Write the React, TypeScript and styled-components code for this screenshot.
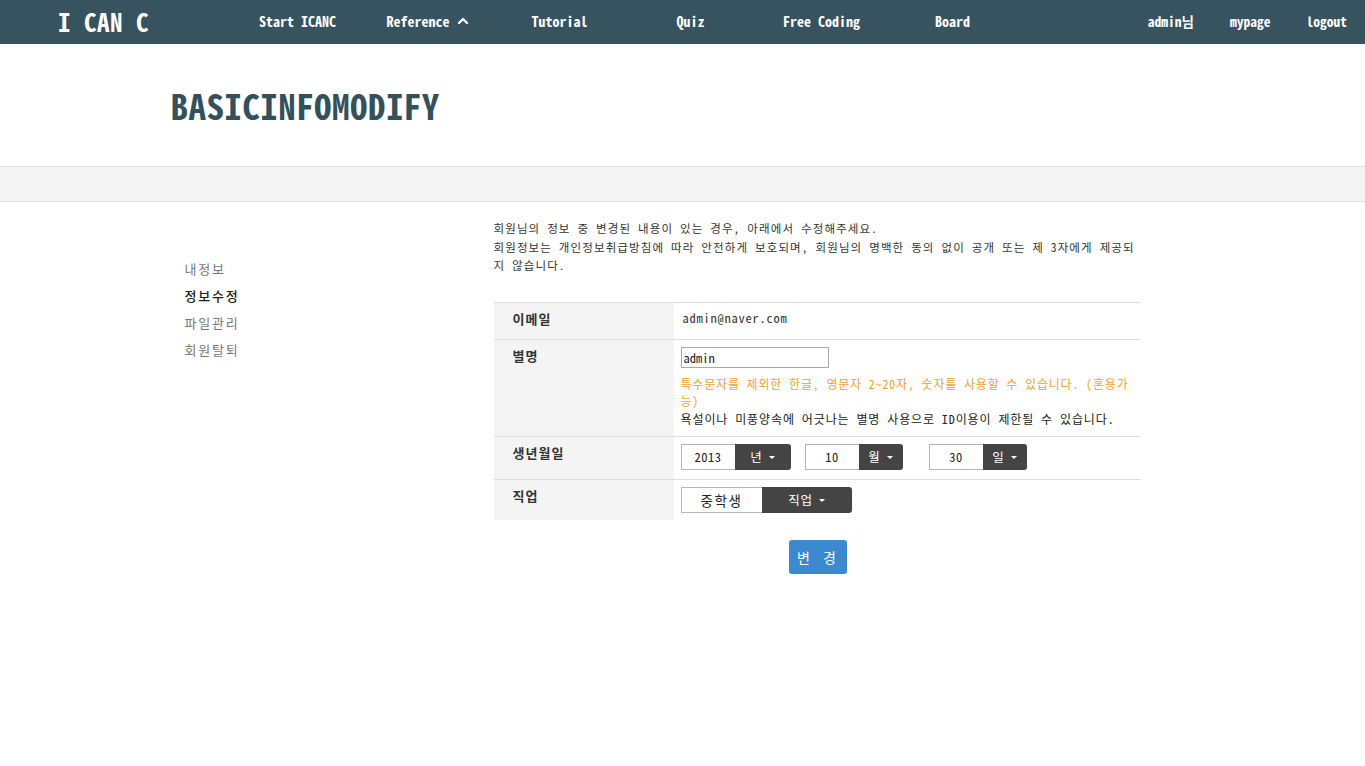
import React from 'react';
import styled, { createGlobalStyle } from 'styled-components';
import { ChevronUp } from 'lucide-react';

const MONO = `"Noto Sans Mono CJK KR", "DejaVu Sans Mono", "Noto Sans CJK KR", monospace`;
const SANS = `"Noto Sans CJK KR", "Noto Sans", sans-serif`;

const GlobalStyle = createGlobalStyle`
  html, body {
    margin: 0;
    padding: 0;
    background: #fff;
    font-family: ${MONO};
    color: #333;
  }
  * { box-sizing: border-box; }
`;

const NavBar = styled.header`
  height: 44px;
  background: #37535f;
  display: flex;
  align-items: center;
  padding: 0 18px 2px 58px;
  color: #fff;
`;

const Logo = styled.div`
  width: 174px;
  font-size: 25px;
  font-weight: 700;
  letter-spacing: 0.5px;
  white-space: pre;
`;

const Menu = styled.nav`
  display: flex;
  flex: 1;
`;

const MenuItem = styled.a`
  width: 131px;
  display: flex;
  justify-content: center;
  align-items: center;
  gap: 5px;
  font-size: 14px;
  font-weight: 700;
  color: #fff;
  white-space: nowrap;
`;

const UserMenu = styled.div`
  display: flex;
  align-items: center;
  gap: 36px;
  font-size: 13.5px;
  font-weight: 700;
`;

const TitleBand = styled.div`
  height: 123px;
  border-bottom: 1px solid #e3e3e3;
`;

const Container = styled.div`
  width: 1024px;
  margin: 0 auto;
`;

const PageTitle = styled.h1`
  margin: 0;
  padding-top: 39px;
  font-size: 35px;
  font-weight: 700;
  color: #34505c;
  letter-spacing: 0.45px;
  line-height: 44px;
`;

const GrayBand = styled.div`
  height: 35px;
  background: #f4f4f4;
  border-bottom: 1px solid #e3e3e3;
`;

const Body = styled(Container)`
  display: flex;
  padding-top: 17px;
`;

const Sidebar = styled.ul`
  list-style: none;
  margin: 0;
  padding: 36px 0 0 14px;
  width: 323px;
`;

const SideItem = styled.li<{ active?: boolean }>`
  font-family: ${SANS};
  font-size: 13px;
  letter-spacing: 1.8px;
  line-height: 27px;
  color: ${p => (p.active ? '#222' : '#777')};
  font-weight: ${p => (p.active ? 500 : 400)};
`;

const Content = styled.main`
  width: 647px;
`;

const Intro = styled.p`
  margin: 0 0 27px;
  font-size: 11.5px;
  line-height: 18.5px;
  letter-spacing: 1.12px;
  color: #333;
  white-space: nowrap;
`;

const Table = styled.div`
  border-top: 1px solid #ddd;
`;

const Row = styled.div<{ last?: boolean }>`
  display: grid;
  grid-template-columns: 180px 1fr;
  border-bottom: ${p => (p.last ? 'none' : '1px solid #ddd')};
`;

const Label = styled.div`
  background: #f4f4f4;
  padding: 6px 19px 8px;
  font-size: 13px;
  font-weight: 700;
  line-height: 20px;
  letter-spacing: 1px;
  color: #333;
`;

const Cell = styled.div<{ pt?: number; pb?: number }>`
  padding: ${p => p.pt ?? 7}px 7px ${p => p.pb ?? 9}px 9px;
  font-size: 12.5px;
  line-height: 18px;
  letter-spacing: 0.75px;
`;

const TextInput = styled.input`
  display: block;
  width: 148px;
  height: 21px;
  margin-left: -2px;
  padding: 0 2px;
  border: 1px solid #a9a9a9;
  font-family: ${MONO};
  font-size: 12.5px;
  color: #222;
  outline: none;
`;

const Hint = styled.div<{ warn?: boolean }>`
  color: ${p => (p.warn ? '#f0a12f' : '#222')};
  font-size: 12px;
  letter-spacing: ${p => (p.warn ? 0.82 : 0.9)}px;
  line-height: 17.5px;
  white-space: nowrap;
`;

const HintBlock = styled.div`
  margin-top: 7px;
  margin-left: -2px;
`;

const DateRow = styled.div`
  display: flex;
  align-items: center;
  margin-left: -2px;
`;

const Group = styled.div<{ ml?: number }>`
  display: flex;
  margin-left: ${p => p.ml ?? 0}px;
`;

const ValueBox = styled.div<{ w: number; big?: boolean }>`
  width: ${p => p.w}px;
  height: 26px;
  border: 1px solid #b5b5b5;
  border-right: none;
  display: flex;
  align-items: center;
  justify-content: center;
  font-size: ${p => (p.big ? 13.5 : 12.5)}px;
  letter-spacing: ${p => (p.big ? 1.5 : 0.5)}px;
  color: #222;
  background: #fff;
`;

const DarkButton = styled.div<{ w: number }>`
  width: ${p => p.w}px;
  height: 26px;
  background: #444;
  color: #fff;
  border-radius: 0 3px 3px 0;
  display: flex;
  align-items: center;
  justify-content: center;
  gap: 6px;
  font-size: 12.5px;
`;

const Caret = styled.span`
  width: 0;
  height: 0;
  border-left: 3px solid transparent;
  border-right: 3px solid transparent;
  border-top: 3.5px solid #fff;
`;

const Actions = styled.div`
  display: flex;
  justify-content: center;
  margin-top: 20px;
`;

const Submit = styled.button`
  width: 58px;
  height: 34px;
  margin-left: 2px;
  background: #3b89cf;
  color: #fff;
  border: none;
  border-radius: 3px;
  font-family: ${MONO};
  font-size: 14px;
  letter-spacing: 3px;
`;

export default function App() {
  return (
    <>
      <GlobalStyle />
      <NavBar>
        <Logo>I CAN C</Logo>
        <Menu>
          <MenuItem>Start ICANC</MenuItem>
          <MenuItem>
            Reference <ChevronUp size={16} strokeWidth={3.5} />
          </MenuItem>
          <MenuItem>Tutorial</MenuItem>
          <MenuItem>Quiz</MenuItem>
          <MenuItem>Free Coding</MenuItem>
          <MenuItem>Board</MenuItem>
        </Menu>
        <UserMenu>
          <span>admin님</span>
          <span>mypage</span>
          <span>logout</span>
        </UserMenu>
      </NavBar>

      <TitleBand>
        <Container>
          <PageTitle>BASICINFOMODIFY</PageTitle>
        </Container>
      </TitleBand>
      <GrayBand />

      <Body>
        <Sidebar>
          <SideItem>내정보</SideItem>
          <SideItem active>정보수정</SideItem>
          <SideItem>파일관리</SideItem>
          <SideItem>회원탈퇴</SideItem>
        </Sidebar>

        <Content>
          <Intro>
            회원님의 정보 중 변경된 내용이 있는 경우, 아래에서 수정해주세요.
            <br />
            회원정보는 개인정보취급방침에 따라 안전하게 보호되며, 회원님의 명백한 동의 없이 공개 또는 제 3자에게 제공되
            <br />지 않습니다.
          </Intro>

          <Table>
            <Row>
              <Label>이메일</Label>
              <Cell pt={6} pb={12}>admin@naver.com</Cell>
            </Row>
            <Row>
              <Label>별명</Label>
              <Cell pt={7} pb={9}>
                <TextInput defaultValue="admin" />
                <HintBlock>
                  <Hint warn>특수문자를 제외한 한글, 영문자 2~20자, 숫자를 사용할 수 있습니다. (혼용가</Hint>
                  <Hint warn>능)</Hint>
                  <Hint>욕설이나 미풍양속에 어긋나는 별명 사용으로 ID이용이 제한될 수 있습니다.</Hint>
                </HintBlock>
              </Cell>
            </Row>
            <Row>
              <Label>생년월일</Label>
              <Cell pt={7} pb={9}>
                <DateRow>
                  <Group>
                    <ValueBox w={54}>2013</ValueBox>
                    <DarkButton w={56}>년 <Caret /></DarkButton>
                  </Group>
                  <Group ml={14}>
                    <ValueBox w={54}>10</ValueBox>
                    <DarkButton w={44}>월 <Caret /></DarkButton>
                  </Group>
                  <Group ml={26}>
                    <ValueBox w={54}>30</ValueBox>
                    <DarkButton w={44}>일 <Caret /></DarkButton>
                  </Group>
                </DateRow>
              </Cell>
            </Row>
            <Row last>
              <Label>직업</Label>
              <Cell pt={7} pb={7}>
                <DateRow>
                  <ValueBox w={81} big>중학생</ValueBox>
                  <DarkButton w={90}>직업 <Caret /></DarkButton>
                </DateRow>
              </Cell>
            </Row>
          </Table>

          <Actions>
            <Submit>변 경</Submit>
          </Actions>
        </Content>
      </Body>
    </>
  );
}
